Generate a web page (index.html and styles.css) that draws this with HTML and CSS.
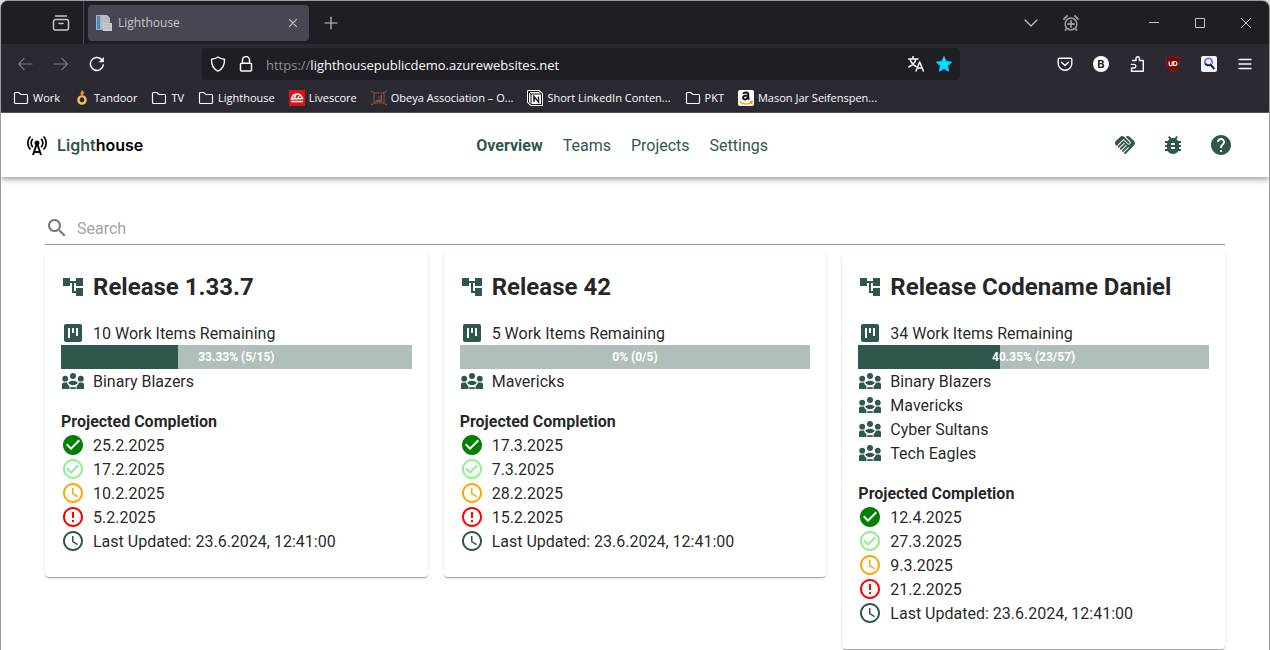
FILE: index.html
```
<!DOCTYPE html>
<html lang="en">
<head>
    <meta charset="UTF-8">
    <meta name="viewport" content="width=device-width, initial-scale=1.0">
    <title>Lighthouse</title>
    <link rel="stylesheet" href="styles.css">
</head>
<body>

    <!-- Shared icons -->
    <svg class="sprite" aria-hidden="true">
        <symbol id="folder" viewBox="0 0 16 16"><path d="M1.500 12.500v-9a1 1 0 0 1 1-1h3.300l2 2h5.700a1 1 0 0 1 1 1v7a1 1 0 0 1-1 1h-11a1 1 0 0 1-1-1z" fill="none" stroke="currentColor" stroke-width="1.200"/></symbol>
        <symbol id="tree" viewBox="0 0 24 24"><path d="M22 11V3h-7v3H9V3H2v8h7V8h2v10h4v3h7v-8h-7v3h-2V8h2v3z"/></symbol>
        <symbol id="kanban" viewBox="0 0 24 24"><path d="M19 3H5c-1.100 0-2 .9-2 2v14c0 1.100.9 2 2 2h14c1.100 0 2-.9 2-2V5c0-1.100-.9-2-2-2zM9 17H7V7h2v10zm4-5h-2V7h2v5zm4 3h-2V7h2v8z"/></symbol>
        <symbol id="team" viewBox="0 0 24 24">
            <circle cx="4.200" cy="9.700" r="2.900"/><circle cx="12" cy="6.900" r="3"/><circle cx="19.800" cy="9.700" r="2.900"/>
            <path d="M7.200 13.400c1.300-1.100 2.900-1.600 4.800-1.600s3.500.5 4.800 1.600c-.9 1.700-2.700 2.800-4.800 2.800s-3.900-1.100-4.800-2.800z"/>
            <path d="M1 20v-4.500c0-1.100.9-2 2-2h3c.6 1.800 1.600 3 2.400 3.500V20zM23 20v-4.500c0-1.100-.9-2-2-2h-3c-.6 1.800-1.600 3-2.400 3.500V20zM9.300 17.700c1.700.7 3.700.7 5.400 0V20H9.300z"/>
        </symbol>
        <symbol id="certain" viewBox="0 0 24 24"><path d="M12 2C6.480 2 2 6.480 2 12s4.480 10 10 10 10-4.480 10-10S17.520 2 12 2zm-2 15-5-5 1.410-1.410L10 14.170l7.590-7.590L19 8l-9 9z"/></symbol>
        <symbol id="realistic" viewBox="0 0 24 24"><path d="M16.590 7.580 10 14.170l-3.590-3.580L5 12l5 5 8-8zM12 2C6.480 2 2 6.480 2 12s4.480 10 10 10 10-4.480 10-10S17.520 2 12 2zm0 18c-4.420 0-8-3.580-8-8s3.580-8 8-8 8 3.580 8 8-3.580 8-8 8z"/></symbol>
        <symbol id="clock" viewBox="0 0 24 24"><path d="M11.990 2C6.470 2 2 6.480 2 12s4.470 10 9.990 10C17.520 22 22 17.520 22 12S17.520 2 11.990 2zM12 20c-4.420 0-8-3.580-8-8s3.580-8 8-8 8 3.580 8 8-3.580 8-8 8z"/><path d="M12.500 7H11v6l5.250 3.150.75-1.230-4.500-2.670z"/></symbol>
        <symbol id="risky" viewBox="0 0 24 24"><path d="M11 15h2v2h-2zm0-8h2v6h-2zm.99-5C6.470 2 2 6.480 2 12s4.470 10 9.990 10C17.520 22 22 17.520 22 12S17.520 2 11.990 2zM12 20c-4.420 0-8-3.580-8-8s3.580-8 8-8 8 3.580 8 8-3.580 8-8 8z"/></symbol>
    </svg>

    <div class="window">
        <!-- Browser chrome -->
        <div class="browser">
            <div class="tab-bar">
                <button class="recent" aria-label="Recent browsing">
                    <svg class="stroke" width="18" height="18" viewBox="0 0 18 18"><path d="M3.500 2h11M1.500 7.500a2 2 0 0 1 2-2h11a2 2 0 0 1 2 2v6.500a2 2 0 0 1-2 2h-11a2 2 0 0 1-2-2zM7 9.500h4" stroke-width="1.500"/></svg>
                </button>
                <div class="tab">
                    <svg width="16" height="16" viewBox="0 0 16 16"><path d="M0 0h9v15H0z" fill="#a9b3bb"/><path d="M1 1h3v13H1z" fill="#4a8ab8"/><path d="M5 0h6l3 3v10H5z" fill="#b9bcc0"/><path d="M7 8h9v8H7z" fill="#c9cbce"/><path d="M8 10h7M8 13h7M7 4h5" stroke="#b0b3b8"/></svg>
                    <span class="tab-title">Lighthouse</span>
                    <button aria-label="Close tab"><svg class="stroke" width="8" height="8" viewBox="0 0 8 8"><path d="m0 0 8 8M8 0 0 8"/></svg></button>
                </div>
                <button class="new-tab" aria-label="New tab"><svg class="stroke" width="14" height="14" viewBox="0 0 14 14"><path d="M7 1v12M1 7h12"/></svg></button>
                <div class="tab-tools">
                    <button aria-label="List all tabs"><svg class="stroke" width="14" height="14" viewBox="0 0 14 14"><path d="m1 4 6 6 6-6"/></svg></button>
                    <button class="dim" aria-label="Snooze tab"><svg class="stroke" width="16" height="16" viewBox="0 0 16 16"><circle cx="8" cy="9" r="5.900" stroke-width="1.600"/><path d="M8 6v6M5 9h6M1 4l3-3M15 4l-3-3M3.500 13.500l-1 1.500M12.500 13.500l1 1.500" stroke-width="1.800"/></svg></button>
                </div>
                <div class="window-buttons">
                    <button aria-label="Minimize"><svg class="stroke" width="10" height="10" viewBox="0 0 10 10"><path d="M0 4.500h10"/></svg></button>
                    <button aria-label="Maximize"><svg class="stroke" width="10" height="10" viewBox="0 0 10 10"><path d="M.5.5h9v9h-9z"/></svg></button>
                    <button aria-label="Close"><svg class="stroke" width="10" height="10" viewBox="0 0 10 10"><path d="m0 0 10 10M10 0 0 10"/></svg></button>
                </div>
            </div>

            <div class="toolbar">
                <div class="tools">
                    <button class="disabled" aria-label="Back"><svg class="stroke" width="16" height="16" viewBox="0 0 16 16"><path d="M15 8H1.500M7 2.500 1.500 8 7 13.500"/></svg></button>
                    <button class="disabled" aria-label="Forward"><svg class="stroke" width="16" height="16" viewBox="0 0 16 16"><path d="M1 8h13.500M9 2.500 14.500 8 9 13.500"/></svg></button>
                    <button aria-label="Reload"><svg class="stroke" width="16" height="16" viewBox="0 0 16 16"><path d="M14.300 9A6.500 6.500 0 1 1 12.500 3.300L14 4.800" stroke-width="1.500"/><path d="M14.800 1v5.200H9.600z" fill="currentColor" stroke="none"/></svg></button>
                </div>
                <div class="url-bar">
                    <svg class="stroke" width="16" height="16" viewBox="0 0 16 16"><path d="M8 1c2 1.500 4 2 6.500 2.300C14.800 9 12.500 13 8 15.200 3.500 13 1.200 9 1.500 3.300 4 3 6 2.500 8 1z" stroke-width="1.400"/></svg>
                    <svg class="stroke" width="16" height="16" viewBox="0 0 16 16"><path d="M4.500 7V4a3.500 3.500 0 0 1 7 0v3M3.500 7.200h9a1 1 0 0 1 1 1V14a1 1 0 0 1-1 1h-9a1 1 0 0 1-1-1V8.200a1 1 0 0 1 1-1z" stroke-width="1.500"/></svg>
                    <span class="url">https://<b>lighthousepublicdemo.azurewebsites.net</b></span>
                    <svg class="stroke" width="16" height="16" viewBox="0 0 16 16"><path d="M.5 3h9.500M5 .5V3M2 3c1 3.500 3.500 6 6 7.500M8 3C7 7 4 9.500.8 11M8 15l3.700-9 3.700 9M9.200 12h5" stroke-width="1.500"/></svg>
                    <svg width="16" height="16" viewBox="0 0 16 16"><path d="m8 .5 2.300 4.900 5.300.7-3.900 3.700 1 5.400L8 12.600l-4.700 2.600 1-5.400L.4 6.100l5.300-.7z" fill="#00ddff" stroke="#00ddff" stroke-linejoin="round" stroke-width=".8"/></svg>
                </div>
                <div class="tools">
                    <button aria-label="Save to Pocket"><svg class="stroke" width="16" height="16" viewBox="0 0 16 16"><path d="M2.500 2.200h11c.8 0 1.300.5 1.300 1.300v4a6.800 6.800 0 0 1-13.600 0v-4c0-.8.5-1.300 1.300-1.300zM4.500 6.300 8 9.600l3.500-3.300" stroke-width="1.400"/></svg></button>
                    <button aria-label="Bitly"><span class="badge-b">B</span></button>
                    <button aria-label="Extensions"><svg class="stroke" width="16" height="16" viewBox="0 0 16 16"><path d="M3.500 4.500H7V2.500a1.700 1.700 0 0 1 3.400 0v2h3.900v10.700H2.500V12H5a1.800 1.800 0 0 0 0-3.600H2.500" stroke-width="1.400"/></svg></button>
                    <button aria-label="uBlock Origin"><span class="shield"><svg width="16" height="16" viewBox="0 0 16 16"><path d="M8 0c2 1.300 4 2 6.700 2 .3 7-1.200 10.800-6.700 14C2.500 12.800 1 9 1.300 2 4 2 6 1.300 8 0z" fill="#800000" stroke="#a33a3a" stroke-width=".4"/><path d="M4.200 5.500v2.800c0 2 3 2 3 0V5.500M8.700 5.500v4h1c3 0 3-4 0-4z" fill="none" stroke="#fff" stroke-width="1.200"/></svg></span></button>
                    <button aria-label="Search helper"><svg width="16" height="16" viewBox="0 0 16 16"><rect width="16" height="16" rx="2" fill="#f4f4ff"/><path d="M4.300 7.500a3.600 3.600 0 1 1 6.500 0" fill="none" stroke="#6b6cff" stroke-width="1.800"/><path d="M4.300 7.500a3.600 3.600 0 0 0 5.200 1.200l3.800 4.300" fill="none" stroke="#22243c" stroke-width="2"/></svg></button>
                    <button aria-label="Menu"><svg class="stroke" width="14" height="12" viewBox="0 0 14 12"><path d="M1 1.500h12M1 6h12M1 10.500h12" stroke-width="1.400"/></svg></button>
                </div>
            </div>

            <nav class="bookmarks" aria-label="Bookmarks">
                <a href="#"><svg><use href="#folder"/></svg>Work</a>
                <a href="#"><svg viewBox="0 0 16 16"><circle cx="8" cy="10" r="3.600" fill="none" stroke="#f5c065" stroke-width="2.400"/><circle cx="8" cy="9" r="1.800" fill="#33251d"/><path d="M8 0c3 2 2 4.500 0 5.500C5.500 4 6.500 2.500 8 0z" fill="#f28a1c"/></svg>Tandoor</a>
                <a href="#"><svg><use href="#folder"/></svg>TV</a>
                <a href="#"><svg><use href="#folder"/></svg>Lighthouse</a>
                <a href="#"><svg viewBox="0 0 16 16"><path d="M0 0h16v16H0z" fill="#d9131a"/><path d="M2.500 9C4 3 11 2 13.500 8.500zM2 11.500h12M5 8l2-3M9 8l1-2" fill="none" stroke="#fff" stroke-width="1.400"/></svg>Livescore</a>
                <a href="#"><svg viewBox="0 0 16 16"><path d="M3 3h10v10H3zM0 1l4 2M16 1l-4 2M0 15l4-2M16 15l-4-2" fill="none" stroke="#81513f" stroke-width="1.200"/><path d="m4 12 7-8v8z" fill="#915038"/><circle cx="8" cy="8" r="2" fill="#4b3440"/></svg>Obeya Association – O...</a>
                <a href="#"><svg viewBox="0 0 16 16"><path d="M1 1h11l3 3v11H4l-3-3z" fill="#fff" stroke="#fff" stroke-linejoin="round" stroke-width="2"/><path d="M1.500 1.500 4 4v10.500M4 4h10.500v10.500H4L1.500 12V1.500H12L14.500 4" fill="none" stroke="#111"/><path d="M7 12V6.500l4.500 5.500V6.500" fill="none" stroke="#111" stroke-width="1.500"/></svg>Short LinkedIn Conten...</a>
                <a href="#"><svg><use href="#folder"/></svg>PKT</a>
                <a href="#"><svg viewBox="0 0 16 16"><rect width="16" height="16" rx="2" fill="#fff"/><path d="M5.300 4c.5-2 5-2.200 5 .5v3.800l.9 1.200M10 5.500c-3 0-5 .5-5 2.300 0 2.300 3.800 2.300 5-.3" fill="none" stroke="#111" stroke-width="1.900"/><path d="M1.500 11.500c4 3.300 9 3.300 12 1M11.500 11.500h2.700l-.7 2.500" fill="none" stroke="#f90" stroke-width="1.400"/></svg>Mason Jar Seifenspen...</a>
            </nav>
        </div>

        <!-- Lighthouse app -->
        <header class="app-header">
            <a class="logo" href="#">
                <svg width="24" height="24" viewBox="0 0 24 24"><path d="m7.300 14.700 1.200-1.200c-1-1-1.500-2.300-1.500-3.500 0-1.300.5-2.600 1.500-3.500L7.300 5.300c-1.300 1.300-2 3-2 4.700s.7 3.400 2 4.700zM19.100 2.900l-1.200 1.200c1.600 1.600 2.400 3.800 2.400 5.900 0 2.100-.8 4.300-2.400 5.900l1.200 1.200c2-2 2.900-4.500 2.900-7.100 0-2.600-1-5.100-2.900-7.100z"/><path d="M6.100 4.100 4.900 2.900C3 4.900 2 7.400 2 10c0 2.600 1 5.100 2.900 7.100l1.200-1.200c-1.600-1.600-2.400-3.800-2.400-5.900 0-2.100.8-4.300 2.400-5.900zM16.700 14.700c1.300-1.300 2-3 2-4.700-.1-1.700-.7-3.400-2-4.700l-1.200 1.200c1 1 1.500 2.300 1.500 3.500 0 1.300-.5 2.600-1.500 3.500l1.200 1.200zM14.500 10c0-1.380-1.120-2.500-2.500-2.500S9.500 8.620 9.500 10c0 .76.34 1.420.87 1.880L7 22h2l.67-2h4.670l.66 2h2l-3.370-10.120c.53-.46.87-1.120.87-1.880zm-4.170 8L12 13l1.670 5h-3.340z"/></svg>
                <span><span class="logo-light">Light</span>house</span>
            </a>
            <nav class="main-nav">
                <a class="active" href="#">Overview</a>
                <a href="#">Teams</a>
                <a href="#">Projects</a>
                <a href="#">Settings</a>
            </nav>
            <div class="header-actions">
                <button aria-label="Contributors"><svg width="24" height="24" viewBox="0 0 24 24"><path d="M16.480 10.410c-.39.39-1.040.39-1.430 0l-4.470-4.460-7.050 7.040-.66-.63c-1.170-1.170-1.170-3.070 0-4.240l4.240-4.240c1.170-1.170 3.070-1.170 4.240 0L16.480 9c.39.39.39 1.020 0 1.410zm.7-2.120c.78.78.78 2.050 0 2.830-1.270 1.270-2.610.22-2.830 0l-3.760-3.760-5.570 5.570c-.39.39-.39 1.020 0 1.410s1.020.39 1.420 0l4.620-4.620.71.71-4.620 4.620c-.39.39-.39 1.020 0 1.410s1.020.39 1.420 0l4.620-4.620.71.71-4.620 4.620c-.39.39-.39 1.020 0 1.410.39.39 1.020.39 1.410 0l4.620-4.620.71.71-4.620 4.620c-.39.39-.39 1.020 0 1.410.39.39 1.020.39 1.410 0l8.320-8.340c1.170-1.170 1.170-3.070 0-4.240l-4.240-4.240c-1.150-1.150-3.010-1.170-4.180-.06l4.470 4.470z"/></svg></button>
                <button aria-label="Report an issue"><svg width="24" height="24" viewBox="0 0 24 24"><path d="M20 8h-2.810c-.45-.78-1.070-1.450-1.820-1.960L17 4.410 15.590 3l-2.170 2.170C12.960 5.060 12.490 5 12 5c-.49 0-.96.06-1.410.17L8.410 3 7 4.410l1.620 1.630C7.880 6.550 7.260 7.220 6.810 8H4v2h2.090c-.05.33-.09.66-.09 1v1H4v2h2v1c0 .34.04.67.09 1H4v2h2.810c1.040 1.790 2.970 3 5.190 3s4.150-1.210 5.190-3H20v-2h-2.090c.05-.33.09-.66.09-1v-1h2v-2h-2v-1c0-.34-.04-.67-.09-1H20V8zm-6 8h-4v-2h4v2zm0-4h-4v-2h4v2z"/></svg></button>
                <button aria-label="Help"><svg width="24" height="24" viewBox="0 0 24 24"><path d="M12 2C6.480 2 2 6.480 2 12s4.480 10 10 10 10-4.480 10-10S17.520 2 12 2zm1 17h-2v-2h2v2zm2.070-7.750-.9.92C13.450 12.900 13 13.500 13 15h-2v-.5c0-1.100.45-2.100 1.170-2.830l1.240-1.260c.37-.36.59-.86.59-1.410 0-1.100-.9-2-2-2s-2 .9-2 2H8c0-2.210 1.790-4 4-4s4 1.790 4 4c0 .88-.36 1.680-.93 2.250z"/></svg></button>
            </div>
        </header>

        <main>
            <label class="search">
                <svg width="24" height="24" viewBox="0 0 24 24"><path d="M15.500 14h-.79l-.28-.27C15.410 12.590 16 11.110 16 9.500 16 5.910 13.090 3 9.500 3S3 5.910 3 9.500 5.910 16 9.500 16c1.610 0 3.090-.59 4.230-1.570l.27.28v.79l5 4.990L20.490 19l-4.990-5zm-6 0C7.010 14 5 11.990 5 9.500S7.010 5 9.500 5 14 7.010 14 9.500 11.990 14 9.500 14z"/></svg>
                <input type="text" placeholder="Search" aria-label="Search">
            </label>
            <div class="cards" id="cards"></div>
        </main>
    </div>

    <script>
        const projects = [
            {
                name: "Release 1.33.7", remaining: 10, done: 5, total: 15,
                teams: ["Binary Blazers"],
                forecasts: ["25.2.2025", "17.2.2025", "10.2.2025", "5.2.2025"]
            },
            {
                name: "Release 42", remaining: 5, done: 0, total: 5,
                teams: ["Mavericks"],
                forecasts: ["17.3.2025", "7.3.2025", "28.2.2025", "15.2.2025"]
            },
            {
                name: "Release Codename Daniel", remaining: 34, done: 23, total: 57,
                teams: ["Binary Blazers", "Mavericks", "Cyber Sultans", "Tech Eagles"],
                forecasts: ["12.4.2025", "27.3.2025", "9.3.2025", "21.2.2025"]
            }
        ];
        const levels = [["certain", "certain"], ["realistic", "realistic"], ["clock", "unsure"], ["risky", "risky"]];

        function row(icon, text, cls = "") {
            return `<div class="row"><svg class="icon ${cls}"><use href="#${icon}"/></svg>${text}</div>`;
        }

        function renderCard(p) {
            const percent = Number((p.done / p.total * 100).toFixed(2));
            return `<article class="card">
                <h2><svg class="icon"><use href="#tree"/></svg>${p.name}</h2>
                ${row("kanban", `${p.remaining} Work Items Remaining`)}
                <div class="progress">
                    <div class="progress-bar" style="width: ${percent}%"></div>
                    <span class="progress-label">${percent}% (${p.done}/${p.total})</span>
                </div>
                ${p.teams.map(team => row("team", team)).join("")}
                <h3>Projected Completion</h3>
                ${p.forecasts.map((date, i) => row(levels[i][0], date, levels[i][1])).join("")}
                ${row("clock", "Last Updated: 23.6.2024, 12:41:00")}
            </article>`;
        }

        document.getElementById("cards").innerHTML = projects.map(renderCard).join("");
    </script>

</body>
</html>
```
FILE: styles.css
```
* {
    box-sizing: border-box;
}
body {
    margin: 0;
    background-color: #dedede;
    font-family: Roboto, sans-serif;
    font-size: 16px;
    line-height: 24px;
    color: rgba(0, 0, 0, 0.87);
}
button {
    display: flex;
    align-items: center;
    justify-content: center;
    padding: 0;
    border: none;
    background: none;
    color: inherit;
    cursor: pointer;
}
a {
    color: inherit;
    text-decoration: none;
}
svg {
    flex-shrink: 0;
    fill: currentColor;
}
.sprite {
    display: none;
}
.stroke {
    fill: none;
    stroke: currentColor;
    stroke-width: 1.2;
    stroke-linecap: round;
    stroke-linejoin: round;
}
.window {
    min-height: 100vh;
    border: 1px solid #9c9c9c;
    border-bottom: none;
    border-radius: 8px 8px 0 0;
    background-color: white;
    overflow: hidden;
}

/* Browser chrome */
.browser {
    background-color: #2b2a33;
    color: #fbfbfe;
    font-family: "Open Sans", sans-serif;
    font-size: 12px;
    line-height: 16px;
    border-bottom: 1px solid #5b5566;
}
.tab-bar {
    display: flex;
    align-items: center;
    height: 43px;
    background-color: #1f1e25;
    color: #c6c6ca;
}
.recent {
    width: 83px;
    height: 43px;
    padding-left: 38px;
    border-right: 1px solid #4a4950;
}
.tab {
    display: flex;
    align-items: center;
    gap: 6px;
    width: 221px;
    height: 36px;
    margin-left: 4px;
    padding: 0 8px;
    border-radius: 4px;
    background-color: #474751;
}
.tab-title {
    flex: 1;
}
.tab button {
    width: 16px;
    height: 16px;
}
.new-tab {
    width: 36px;
    height: 36px;
    margin-left: 4px;
}
.tab-tools {
    display: flex;
    margin-left: auto;
    margin-right: 40px;
}
.tab-tools button {
    width: 40px;
    height: 36px;
}
.dim {
    color: #96969b;
}
.window-buttons {
    display: flex;
}
.window-buttons button {
    width: 46px;
    height: 36px;
}
.window-buttons .stroke {
    stroke-width: 1;
    stroke-linecap: butt;
}
.toolbar {
    display: flex;
    align-items: center;
    gap: 87px;
    height: 40px;
    padding: 0 6px;
}
.tools {
    display: flex;
}
.tools button {
    width: 36px;
    height: 36px;
}
.disabled {
    color: #77767d;
}
.url-bar {
    display: flex;
    flex: 1;
    align-items: center;
    gap: 12px;
    height: 32px;
    padding: 0 8px;
    border-radius: 4px;
    background-color: #1f1e25;
}
.url {
    flex: 1;
    padding-top: 2px;
    font-size: 13px;
    color: #8f8e95;
}
.url b {
    font-weight: normal;
    color: #fbfbfe;
}
.badge-b {
    width: 16px;
    height: 16px;
    border-radius: 50%;
    background-color: white;
    color: #1f1e25;
    font: bold 11px/16px Inter, sans-serif;
}
.shield svg {
    display: block;
}
.bookmarks {
    display: flex;
    gap: 14px;
    height: 28px;
    padding: 0 12px;
    font-size: 11px;
}
.bookmarks a {
    display: flex;
    align-items: center;
    gap: 4px;
    white-space: nowrap;
}
.bookmarks svg {
    width: 16px;
    height: 16px;
}

/* App header */
.app-header {
    display: flex;
    align-items: center;
    justify-content: space-between;
    height: 64px;
    padding: 0 24px;
    color: #30574e;
    box-shadow: 0 2px 4px -1px rgba(0, 0, 0, 0.2), 0 4px 5px 0 rgba(0, 0, 0, 0.14), 0 1px 10px 0 rgba(0, 0, 0, 0.12);
}
.logo {
    display: flex;
    align-items: center;
    gap: 8px;
    color: black;
    font-family: Inter, sans-serif;
    font-weight: 600;
}
.logo-light {
    color: #30574e;
}
.main-nav {
    display: flex;
    gap: 20px;
    padding-top: 2px;
}
.active {
    font-weight: bold;
}
.header-actions {
    display: flex;
}
.header-actions button {
    width: 48px;
    height: 48px;
}

/* Overview page */
main {
    padding: 35px 44px 0;
}
.search {
    display: flex;
    align-items: center;
    gap: 8px;
    height: 33px;
    border-bottom: 1px solid #949494;
    color: rgba(0, 0, 0, 0.54);
}
.search input {
    flex: 1;
    padding: 2px 0 0;
    border: none;
    outline: none;
    background: none;
    font: inherit;
}
.search input::placeholder {
    color: #a4a4a4;
}
.cards {
    display: grid;
    grid-template-columns: repeat(3, 1fr);
    align-items: start;
    gap: 16px;
    padding-top: 8px;
}
.card {
    padding: 16px 16px 24px;
    border-radius: 4px;
    box-shadow: 0 2px 1px -1px rgba(0, 0, 0, 0.2), 0 1px 1px 0 rgba(0, 0, 0, 0.14), 0 1px 3px 0 rgba(0, 0, 0, 0.12);
}
.card h2 {
    display: flex;
    align-items: center;
    gap: 8px;
    margin: 0 0 16px;
    font-size: 24px;
    line-height: 36px;
}
.card h3 {
    height: 24px;
    margin: 16px 0 0;
    font-size: 16px;
    line-height: 26px;
}
.row {
    display: flex;
    gap: 8px;
    height: 24px;
    line-height: 26px;
}
.icon {
    width: 24px;
    height: 24px;
    color: #30574e;
}
.certain {
    color: green;
}
.realistic {
    color: lightgreen;
}
.unsure {
    color: orange;
}
.risky {
    color: red;
}
.progress {
    position: relative;
    height: 24px;
    background-color: #b0bfbb;
}
.progress-bar {
    height: 100%;
    background-color: #30574e;
}
.progress-label {
    position: absolute;
    inset: 0;
    color: white;
    font-size: 12px;
    font-weight: bold;
    text-align: center;
}
```
